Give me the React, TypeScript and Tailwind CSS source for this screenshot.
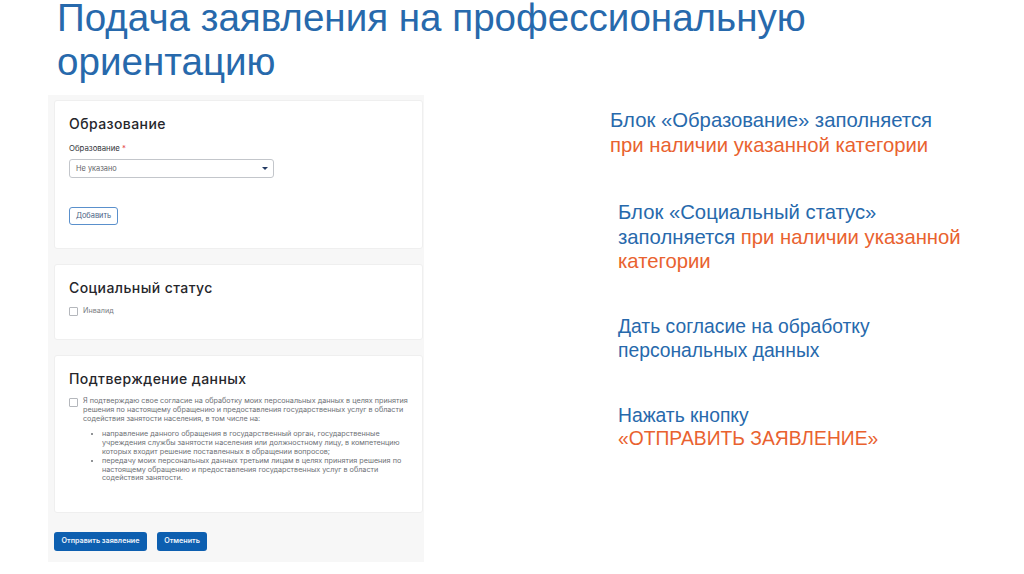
import React from 'react';

const formFont = 'font-["Inter",sans-serif]';

const Card = ({ title, className, children }: { title: string; className: string; children: React.ReactNode }) => (
  <div className={`bg-white rounded-[3px] border border-[#efefef] pl-[14px] pr-3 pt-[15px] ${className}`}>
    <h3 className="text-[14px] leading-[16px] font-medium text-[#26262b] tracking-[0.42px] whitespace-nowrap">{title}</h3>
    {children}
  </div>
);

const Check = () => <span className="block w-[9px] h-[9px] shrink-0 bg-white border border-[#b4b7bc] rounded-[1px]" />;

export default function App() {
  return (
    <div className='w-[1024px] h-[574px] overflow-hidden bg-white font-["Liberation_Sans",sans-serif]'>
      <h1 className="pl-[57px] text-[38.6px] text-[#2769ac] h-[95px] flex flex-col">
        <span className="h-[39.5px] leading-[35.5px]">Подача заявления на профессиональную</span>
        <span className="leading-[43.5px]">ориентацию</span>
      </h1>
      <div className="flex">
        <div className={`w-[376px] h-[467px] ml-[48px] bg-[#f7f7f7] pl-[6px] pr-px pt-[5px] ${formFont}`}>
          <Card title="Образование" className="h-[149px]">
            <p className="mt-[11px] text-[7.8px] leading-[10px] text-[#33363b]">
              Образование <span className="text-[#e5484d]">*</span>
            </p>
            <div className="mt-[6px] w-[205px] h-[19px] flex items-center justify-between pl-[6px] pr-[5px] bg-white rounded-[3px] border border-[#c3c6cb]">
              <span className="text-[7.4px] text-[#5f6368]">Не указано</span>
              <span className="w-0 h-0 border-x-[3px] border-x-transparent border-t-[3px] border-t-[#233a63]" />
            </div>
            <button className="block mt-[29px] w-[49px] h-[18px] bg-white rounded-[3px] border border-[#5a90cc] text-[7.4px] leading-[16px] text-[#4a6285] text-center">
              Добавить
            </button>
          </Card>
          <Card title="Социальный статус" className="h-[76px] mt-[15px]">
            <div className="mt-[10px] flex items-center gap-[5px]">
              <Check />
              <span className="text-[7.2px] text-[#777b80]">Инвалид</span>
            </div>
          </Card>
          <Card title="Подтверждение данных" className="h-[158px] mt-[15px]">
            <div className="mt-[10px] flex gap-[5px] text-[7.22px] leading-[8.8px] text-[#6d7075] whitespace-nowrap">
              <div className="pt-[1px]">
                <Check />
              </div>
              <div>
                <p>
                  Я подтверждаю свое согласие на обработку моих персональных данных в целях принятия
                  <br />
                  решения по настоящему обращению и предоставления государственных услуг в области
                  <br />
                  содействия занятости населения, в том числе на:
                </p>
                <ul className="mt-[7px] pl-[19px] list-disc">
                  <li>
                    направление данного обращения в государственный орган, государственные
                    <br />
                    учреждения службы занятости населения или должностному лицу, в компетенцию
                    <br />
                    которых входит решение поставленных в обращении вопросов;
                  </li>
                  <li>
                    передачу моих персональных данных третьим лицам в целях принятия решения по
                    <br />
                    настоящему обращению и предоставления государственных услуг в области
                    <br />
                    содействия занятости.
                  </li>
                </ul>
              </div>
            </div>
          </Card>
          <div className="flex gap-[10px] mt-[19px]">
            <button className="w-[93px] h-[19px] rounded-[3px] bg-[#0d5fb0] text-[#eef4fb] text-[7.2px] font-semibold">Отправить заявление</button>
            <button className="w-[50px] h-[19px] rounded-[3px] bg-[#0d5fb0] text-[#eef4fb] text-[7.2px] font-semibold">Отменить</button>
          </div>
        </div>
        <div className="text-[20.3px] leading-[25px] text-[#2769ac]">
          <p className="ml-[186px] mt-[13px] whitespace-nowrap">
            Блок «Образование» заполняется
            <br />
            <span className="text-[#e9622f]">при наличии указанной категории</span>
          </p>
          <p className="ml-[194px] mt-[42px] whitespace-nowrap leading-[24.5px]">
            Блок «Социальный статус»
            <br />
            заполняется <span className="text-[#e9622f]">при наличии указанной</span>
            <br />
            <span className="text-[#e9622f]">категории</span>
          </p>
          <p className="ml-[194px] mt-[41px] whitespace-nowrap leading-[24px] text-[19.3px]">
            Дать согласие на обработку
            <br />
            персональных данных
          </p>
          <p className="ml-[194px] mt-[41px] whitespace-nowrap leading-[23px] text-[19.3px]">
            Нажать кнопку
            <br />
            <span className="text-[#e9622f]">«ОТПРАВИТЬ ЗАЯВЛЕНИЕ»</span>
          </p>
        </div>
      </div>
    </div>
  );
}
